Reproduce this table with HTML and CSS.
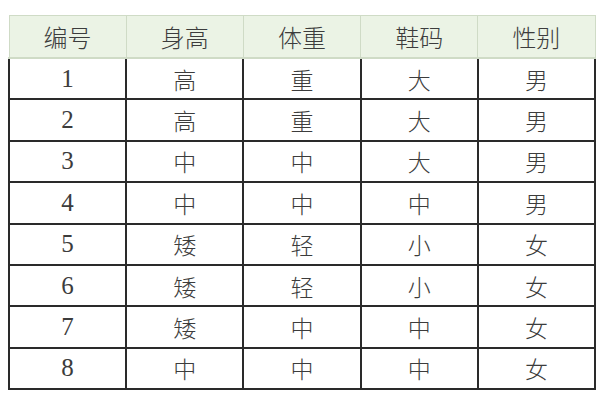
FILE: index.html
```html
<!DOCTYPE html>
<html lang="zh">
<head>
<meta charset="utf-8">
<link rel="stylesheet" href="styles.css">
</head>
<body>
<div class="wrap">
<table class="grid">
<thead>
<tr><th>编号</th><th>身高</th><th>体重</th><th>鞋码</th><th>性别</th></tr>
</thead>
<tbody>
<tr><td class="num">1</td><td>高</td><td>重</td><td>大</td><td>男</td></tr>
<tr><td class="num">2</td><td>高</td><td>重</td><td>大</td><td>男</td></tr>
<tr><td class="num">3</td><td>中</td><td>中</td><td>大</td><td>男</td></tr>
<tr><td class="num">4</td><td>中</td><td>中</td><td>中</td><td>男</td></tr>
<tr><td class="num">5</td><td>矮</td><td>轻</td><td>小</td><td>女</td></tr>
<tr><td class="num">6</td><td>矮</td><td>轻</td><td>小</td><td>女</td></tr>
<tr><td class="num">7</td><td>矮</td><td>中</td><td>中</td><td>女</td></tr>
<tr><td class="num">8</td><td>中</td><td>中</td><td>中</td><td>女</td></tr>
</tbody>
</table>
</div>
</body>
</html>
```
FILE: styles.css
```css
html, body {
  margin: 0;
  padding: 0;
  background: #ffffff;
}
.wrap {
  padding: 15px 0 0 8px;
}
.grid {
  border-collapse: collapse;
  table-layout: fixed;
  width: 588px;
  font-family: "Liberation Serif", "Noto Sans CJK SC", serif;
  color: #3c3c3c;
}
.grid th {
  background: #ebf3e5;
  border: 1px solid #cfdbc6;
  height: 41px;
  font-weight: 300;
  font-size: 24px;
  padding: 0;
  text-align: center;
  vertical-align: middle;
}
.grid td {
  border: 2px solid #2a2a2a;
  height: 39.4px;
  font-size: 23px;
  font-weight: 300;
  padding: 0;
  text-align: center;
  vertical-align: middle;
}
.grid thead tr th {
  border-bottom: 2px solid #cfdbc6;
}
.grid td.num {
  font-size: 25px;
}
```
